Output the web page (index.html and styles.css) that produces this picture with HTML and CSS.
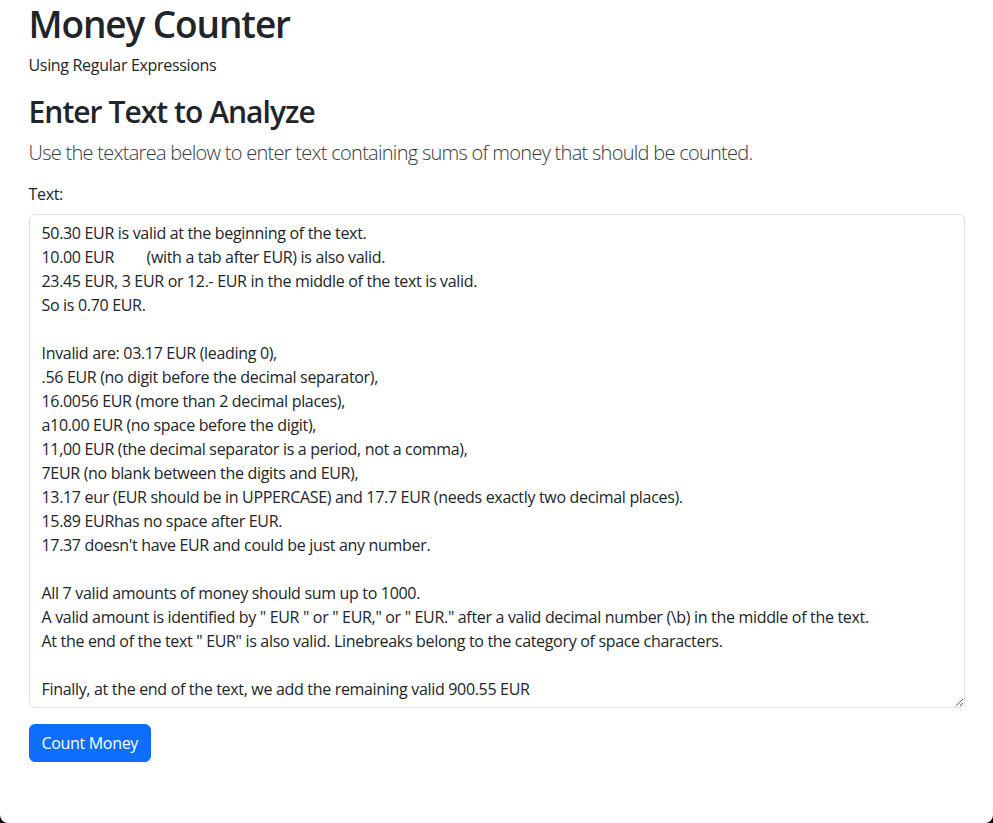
FILE: index.html
```html
<!DOCTYPE html>
<html lang="en">
<head>
<meta charset="utf-8">
<title>Money Counter</title>
<link rel="stylesheet" href="styles.css">
</head>
<body>
<div class="window">
  <div class="container">
    <h1 class="title">Money Counter</h1>
    <p class="subtitle">Using Regular Expressions</p>
    <h2 class="section-title">Enter Text to Analyze</h2>
    <p class="lead">Use the textarea below to enter text containing sums of money that should be counted.</p>
    <label class="form-label" for="text">Text:</label>
    <textarea class="form-control" id="text" rows="20">50.30 EUR is valid at the beginning of the text.
10.00 EUR	(with a tab after EUR) is also valid.
23.45 EUR, 3 EUR or 12.- EUR in the middle of the text is valid.
So is 0.70 EUR.

Invalid are: 03.17 EUR (leading 0),
.56 EUR (no digit before the decimal separator),
16.0056 EUR (more than 2 decimal places),
a10.00 EUR (no space before the digit),
11,00 EUR (the decimal separator is a period, not a comma),
7EUR (no blank between the digits and EUR),
13.17 eur (EUR should be in UPPERCASE) and 17.7 EUR (needs exactly two decimal places).
15.89 EURhas no space after EUR.
17.37 doesn't have EUR and could be just any number.

All 7 valid amounts of money should sum up to 1000.
A valid amount is identified by " EUR " or " EUR," or " EUR." after a valid decimal number (\b) in the middle of the text.
At the end of the text " EUR" is also valid. Linebreaks belong to the category of space characters.

Finally, at the end of the text, we add the remaining valid 900.55 EUR</textarea>
    <button class="btn-primary" type="button">Count Money</button>
  </div>
</div>
</body>
</html>
```
FILE: styles.css
```css
html, body {
  margin: 0;
  padding: 0;
  background: #000;
}
body {
  font-family: "Open Sans", "Noto Sans", sans-serif;
  font-size: 16px;
  line-height: 1.5;
  color: #212529;
  letter-spacing: -0.02em;
}
.window {
  background: #fff;
  height: 823px;
  border-radius: 0 0 8px 8px;
  overflow: hidden;
}
.container {
  width: 960px;
  margin: 0 auto;
  padding: 0 12px;
  box-sizing: border-box;
}
.title {
  font-size: 37px;
  font-weight: 600;
  line-height: 48px;
  margin: 0 0 5px;
  letter-spacing: -0.03em;
}
.subtitle {
  margin: 0 0 16px;
}
.section-title {
  font-size: 30px;
  font-weight: 600;
  line-height: 38.4px;
  margin: 0 0 7px;
  letter-spacing: -0.032em;
}
.lead {
  font-size: 20px;
  font-weight: 300;
  margin: 0 0 14px;
  color: #343a40;
  letter-spacing: -0.036em;
}
.form-label {
  display: block;
  margin-bottom: 8px;
}
.form-control {
  display: block;
  width: 100%;
  box-sizing: border-box;
  padding: 6px 12px;
  font-family: inherit;
  font-size: 16px;
  line-height: 1.5;
  letter-spacing: inherit;
  color: #212529;
  background: #fff;
  border: 1px solid #dee2e6;
  border-radius: 6px;
  resize: vertical;
  tab-size: 35px;
  outline: none;
}
.btn-primary {
  margin-top: 16px;
  padding: 6px 12px;
  font-family: inherit;
  font-size: 16px;
  line-height: 1.5;
  letter-spacing: inherit;
  color: #fff;
  background: #0d6efd;
  border: 1px solid #0d6efd;
  border-radius: 6px;
}
```
